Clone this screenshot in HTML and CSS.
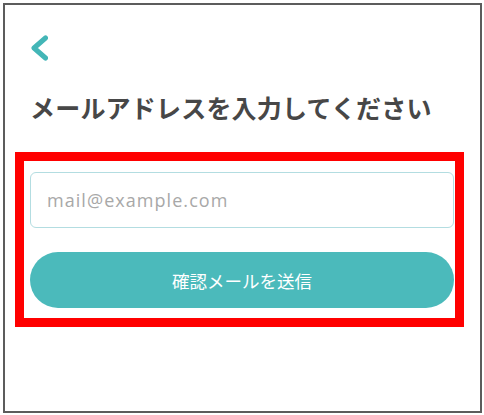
FILE: index.html
```html
<!DOCTYPE html>
<html lang="ja">
<head>
<meta charset="utf-8">
<link rel="stylesheet" href="styles.css">
</head>
<body>
<div class="frame">
  <div class="content">
    <a class="back" href="#" aria-label="戻る">
      <svg width="18" height="26" viewBox="0 0 18 26">
        <polyline points="15.5,3 4,13 15.5,23" fill="none" stroke="#43b6b7" stroke-width="5" stroke-linecap="round" stroke-linejoin="round"/>
      </svg>
    </a>
    <h1 class="title">メールアドレスを入力してください</h1>
    <form class="form">
      <input class="email" type="email" placeholder="mail@example.com">
      <button class="submit" type="button">確認メールを送信</button>
    </form>
  </div>
  <div class="highlight"></div>
</div>
</body>
</html>
```
FILE: styles.css
```css
html, body {
  margin: 0;
  padding: 0;
  background: #ffffff;
}
.frame {
  position: relative;
  box-sizing: border-box;
  margin: 3px 2px 0 3px;
  width: 479px;
  height: 410px;
  border: 2px solid #5c5c5c;
  background: #ffffff;
  font-family: "Noto Sans CJK JP", "Noto Sans", sans-serif;
}
.content {
  display: flex;
  flex-direction: column;
  padding: 30px 27px 0 25px;
}
.back {
  display: block;
  width: 18px;
  height: 26px;
}
.back svg {
  display: block;
}
.title {
  margin: 30px 0 0 0;
  font-size: 25px;
  line-height: 32px;
  font-weight: 700;
  color: #474747;
  letter-spacing: 0.2px;
  white-space: nowrap;
}
.form {
  display: flex;
  flex-direction: column;
  gap: 24px;
  margin-top: 49px;
}
.email {
  box-sizing: border-box;
  width: 424px;
  height: 56px;
  margin: 0;
  padding: 0 16px;
  border: 1px solid #b3dde1;
  border-radius: 6px;
  font-family: "Open Sans", sans-serif;
  font-size: 18px;
  letter-spacing: 1.05px;
  color: #444;
  outline: none;
}
.email::placeholder {
  color: #a8a8a8;
}
.submit {
  box-sizing: border-box;
  width: 424px;
  height: 56px;
  margin: 0;
  border: none;
  border-radius: 28px;
  background: #4bbabb;
  color: #ffffff;
  font-family: "Noto Sans CJK JP", sans-serif;
  font-size: 17.5px;
  font-weight: 400;
}
.highlight {
  position: absolute;
  left: 10px;
  top: 147px;
  width: 449px;
  height: 175px;
  box-sizing: border-box;
  border: 9px solid #ff0000;
  pointer-events: none;
}
```
